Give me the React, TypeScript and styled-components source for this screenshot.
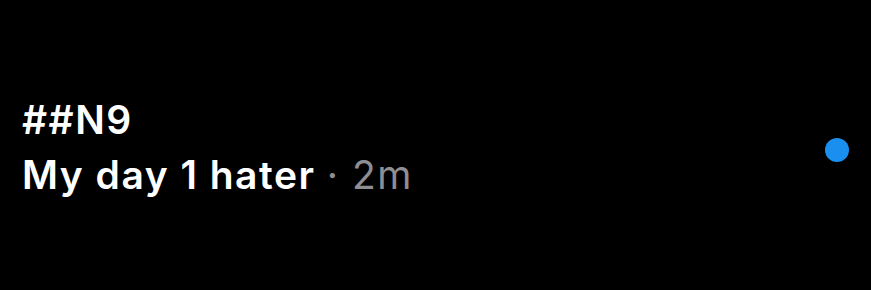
import React from "react";
import styled, { createGlobalStyle } from "styled-components";

const Global = createGlobalStyle`
  html, body { margin: 0; padding: 0; background: #000; }
  body { font-family: Inter, "Noto Sans", sans-serif; -webkit-font-smoothing: antialiased; }
`;

const Row = styled.div`
  width: 871px;
  height: 290px;
  box-sizing: border-box;
  padding: 0 22px 0 22px;
  display: flex;
  align-items: center;
  justify-content: space-between;
  background: #000;
`;

const Text = styled.div`
  display: flex;
  flex-direction: column;
  gap: 8px;
  margin-top: 3px;
`;

const Line = styled.div`
  color: #fff;
  font-size: 39px;
  font-weight: 600;
  line-height: 47px;
  letter-spacing: 1.5px;
  white-space: nowrap;
`;

const Meta = styled.span`
  color: #8e8e93;
  font-weight: 400;
`;

const Dot = styled.span`
  width: 24px;
  height: 24px;
  border-radius: 50%;
  background: #1a8fef;
  margin-top: 10px;
`;

export default function App() {
  return (
    <>
      <Global />
      <Row>
        <Text>
          <Line>##N9</Line>
          <Line>
            My day 1 hater <Meta>· 2m</Meta>
          </Line>
        </Text>
        <Dot />
      </Row>
    </>
  );
}
